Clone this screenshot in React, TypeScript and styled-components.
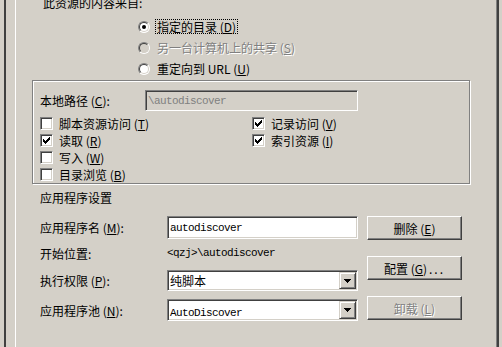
import React from 'react';
import styled, { createGlobalStyle, css } from 'styled-components';

const face = '#d4d0c8';
const shadow = '#808080';
const dark = '#404040';
const light = '#ffffff';

const GlobalStyle = createGlobalStyle`
  html, body {
    margin: 0;
    padding: 0;
    background: ${face};
  }
  body {
    font-family: "Noto Sans CJK SC", "Noto Sans", sans-serif;
    font-size: 12px;
    color: #000;
    overflow: hidden;
  }
`;

const sunken = css`
  box-sizing: border-box;
  border: 1px solid;
  border-color: ${shadow} ${light} ${light} ${shadow};
  box-shadow: inset 1px 1px ${dark}, inset -1px -1px ${face};
`;

const raised = css`
  box-sizing: border-box;
  border: 1px solid;
  border-color: ${light} ${dark} ${dark} ${light};
  box-shadow: inset -1px -1px ${shadow};
  background: ${face};
`;

const disabledText = css`
  color: ${shadow};
  text-shadow: 1px 1px ${light};
`;

const Screen = styled.div`
  width: 502px;
  height: 347px;
  box-sizing: border-box;
  overflow: hidden;
  display: flex;
  padding: 0 3px 0 4px;
  background: ${face};
`;

const OuterEdge = styled.div`
  flex: 1;
  display: flex;
  border-left: 2px solid ${dark};
  padding-left: 9px;
`;

const Page = styled.div`
  flex: 1;
  border-left: 1px solid ${light};
  border-right: 2px solid ${dark};
  box-shadow: inset -1px 0 ${shadow};
  padding-left: 16px;
`;

const Heading = styled.div<{ $indent: number; $top: number }>`
  margin-left: ${(p) => p.$indent}px;
  margin-top: ${(p) => p.$top}px;
  line-height: 14px;
  white-space: nowrap;
`;

const RadioList = styled.div`
  margin: 6px 0 0 106px;
  display: flex;
  flex-direction: column;
`;

const RadioRow = styled.div<{ $disabled?: boolean }>`
  height: 21px;
  display: flex;
  align-items: center;
  gap: 5px;
  white-space: nowrap;
  ${(p) => p.$disabled && disabledText}
`;

const RadioDot = styled.span<{ $checked?: boolean; $disabled?: boolean }>`
  position: relative;
  width: 12px;
  height: 12px;
  border-radius: 50%;
  box-sizing: border-box;
  border: 1px solid;
  border-color: ${shadow} ${light} ${light} ${shadow};
  background: ${(p) => (p.$disabled ? face : light)};
  flex: none;
  &::before {
    content: '';
    position: absolute;
    inset: 0;
    border-radius: 50%;
    border: 1px solid;
    border-color: ${dark} ${face} ${face} ${dark};
  }
  ${(p) =>
    p.$checked &&
    css`
      &::after {
        content: '';
        position: absolute;
        left: 3px;
        top: 3px;
        width: 4px;
        height: 4px;
        border-radius: 50%;
        background: #000;
      }
    `}
`;

const RadioLabel = styled.span<{ $focused?: boolean }>`
  line-height: 13px;
  padding: 0 1px;
  border: 1px dotted ${(p) => (p.$focused ? '#000' : 'transparent')};
`;

const Key = styled.span`
  text-decoration: underline;
`;

const GroupBox = styled.div`
  width: 438px;
  box-sizing: border-box;
  margin-top: 1px;
  border: 1px solid ${shadow};
  box-shadow: inset 1px 1px ${light}, 1px 1px ${light};
  padding: 9px 0 0 7px;
`;

const FieldRow = styled.div<{ $h: number }>`
  height: ${(p) => p.$h}px;
  display: flex;
  align-items: center;
`;

const FieldLabel = styled.span<{ $w: number }>`
  width: ${(p) => p.$w}px;
  flex: none;
  white-space: nowrap;
`;

const TextBox = styled.div<{ $w: number; $h: number; $disabled?: boolean }>`
  ${sunken};
  width: ${(p) => p.$w}px;
  height: ${(p) => p.$h}px;
  background: ${(p) => (p.$disabled ? face : light)};
  color: ${(p) => (p.$disabled ? shadow : '#000')};
  display: flex;
  align-items: center;
  padding: 1px 1px 1px 2px;
  white-space: nowrap;
  overflow: hidden;
`;

const Mono = styled.span`
  font-family: "Liberation Mono", "DejaVu Sans Mono", monospace;
  font-size: 11px;
  letter-spacing: -0.6px;
`;

const CheckGrid = styled.div`
  margin-top: 4px;
  display: grid;
  grid-template-columns: 212px 1fr;
  grid-template-rows: repeat(4, 17px);
  grid-auto-flow: column;
`;

const CheckRow = styled.label`
  display: flex;
  align-items: center;
  gap: 6px;
  white-space: nowrap;
`;

const CheckBox = styled.span`
  ${sunken};
  width: 13px;
  height: 13px;
  background: ${light};
  display: flex;
  align-items: center;
  justify-content: center;
  flex: none;
`;

const Form = styled.div`
  display: flex;
  margin-top: 10px;
  padding-left: 8px;
`;

const FormFields = styled.div`
  width: 318px;
  display: flex;
  flex-direction: column;
`;

const ButtonColumn = styled.div`
  margin: 1px 0 0 9px;
  height: 104px;
  display: flex;
  flex-direction: column;
  justify-content: space-between;
`;

const PushButton = styled.button<{ $disabled?: boolean }>`
  ${raised};
  width: 95px;
  height: 24px;
  padding: 0;
  font: inherit;
  font-size: 12px;
  color: #000;
  display: flex;
  align-items: center;
  justify-content: center;
  white-space: nowrap;
  ${(p) => p.$disabled && disabledText}
`;

const Dots = styled.span`
  letter-spacing: 2px;
  margin-left: 2px;
`;

const ComboBox = styled(TextBox)`
  justify-content: space-between;
  padding: 1px;
`;

const ComboValue = styled.span`
  padding-left: 1px;
`;

const DropButton = styled.span`
  ${raised};
  box-shadow: inset 1px 1px ${light}, inset -1px -1px ${shadow};
  border-color: ${face} ${dark} ${dark} ${face};
  width: 17px;
  height: 100%;
  display: flex;
  align-items: center;
  justify-content: center;
  flex: none;
`;

const Check = () => (
  <svg width="7" height="7" viewBox="0 0 7 7" shapeRendering="crispEdges">
    {[2, 3, 4, 3, 2, 1, 0].map((y, x) => (
      <rect key={x} x={x} y={y} width="1" height="3" fill="#000" />
    ))}
  </svg>
);

const Arrow = () => (
  <svg width="7" height="4" viewBox="0 0 7 4" shapeRendering="crispEdges">
    <rect x="0" y="0" width="7" height="1" fill="#000" />
    <rect x="1" y="1" width="5" height="1" fill="#000" />
    <rect x="2" y="2" width="3" height="1" fill="#000" />
    <rect x="3" y="3" width="1" height="1" fill="#000" />
  </svg>
);

const checks: { label: string; key: string; checked: boolean }[] = [
  { label: '脚本资源访问', key: 'T', checked: false },
  { label: '读取', key: 'R', checked: true },
  { label: '写入', key: 'W', checked: false },
  { label: '目录浏览', key: 'B', checked: false },
  { label: '记录访问', key: 'V', checked: true },
  { label: '索引资源', key: 'I', checked: true },
];

export default function App() {
  return (
    <>
      <GlobalStyle />
      <Screen>
        <OuterEdge>
          <Page>
            <Heading $indent={11} $top={-4}>此资源的内容来自:</Heading>
            <RadioList>
              <RadioRow>
                <RadioDot $checked />
                <RadioLabel $focused>
                  指定的目录 (<Key>D</Key>)
                </RadioLabel>
              </RadioRow>
              <RadioRow $disabled>
                <RadioDot $disabled />
                <RadioLabel>
                  另一台计算机上的共享 (<Key>S</Key>)
                </RadioLabel>
              </RadioRow>
              <RadioRow>
                <RadioDot />
                <RadioLabel>
                  重定向到 URL (<Key>U</Key>)
                </RadioLabel>
              </RadioRow>
            </RadioList>

            <GroupBox>
              <FieldRow $h={21}>
                <FieldLabel $w={105}>
                  本地路径 (<Key>C</Key>):
                </FieldLabel>
                <TextBox $w={213} $h={21} $disabled>
                  <Mono>\autodiscover</Mono>
                </TextBox>
              </FieldRow>
              <CheckGrid>
                {checks.map((c) => (
                  <CheckRow key={c.key}>
                    <CheckBox>{c.checked && <Check />}</CheckBox>
                    <span>
                      {c.label} (<Key>{c.key}</Key>)
                    </span>
                  </CheckRow>
                ))}
              </CheckGrid>
            </GroupBox>

            <Heading $indent={8} $top={7}>应用程序设置</Heading>
            <Form>
              <FormFields>
                <FieldRow $h={25}>
                  <FieldLabel $w={127}>
                    应用程序名 (<Key>M</Key>):
                  </FieldLabel>
                  <TextBox $w={191} $h={23}>
                    <Mono>autodiscover</Mono>
                  </TextBox>
                </FieldRow>
                <FieldRow $h={26}>
                  <FieldLabel $w={127}>开始位置:</FieldLabel>
                  <Mono>&lt;qzj&gt;\autodiscover</Mono>
                </FieldRow>
                <FieldRow $h={29}>
                  <FieldLabel $w={127}>
                    执行权限 (<Key>P</Key>):
                  </FieldLabel>
                  <ComboBox $w={191} $h={21}>
                    <ComboValue>纯脚本</ComboValue>
                    <DropButton>
                      <Arrow />
                    </DropButton>
                  </ComboBox>
                </FieldRow>
                <FieldRow $h={30}>
                  <FieldLabel $w={127}>
                    应用程序池 (<Key>N</Key>):
                  </FieldLabel>
                  <ComboBox $w={191} $h={22}>
                    <ComboValue>
                      <Mono>AutoDiscover</Mono>
                    </ComboValue>
                    <DropButton>
                      <Arrow />
                    </DropButton>
                  </ComboBox>
                </FieldRow>
              </FormFields>
              <ButtonColumn>
                <PushButton>
                  删除 (<Key>E</Key>)
                </PushButton>
                <PushButton>
                  配置 (<Key>G</Key>)<Dots>...</Dots>
                </PushButton>
                <PushButton $disabled>
                  卸载 (<Key>L</Key>)
                </PushButton>
              </ButtonColumn>
            </Form>
          </Page>
        </OuterEdge>
      </Screen>
    </>
  );
}
